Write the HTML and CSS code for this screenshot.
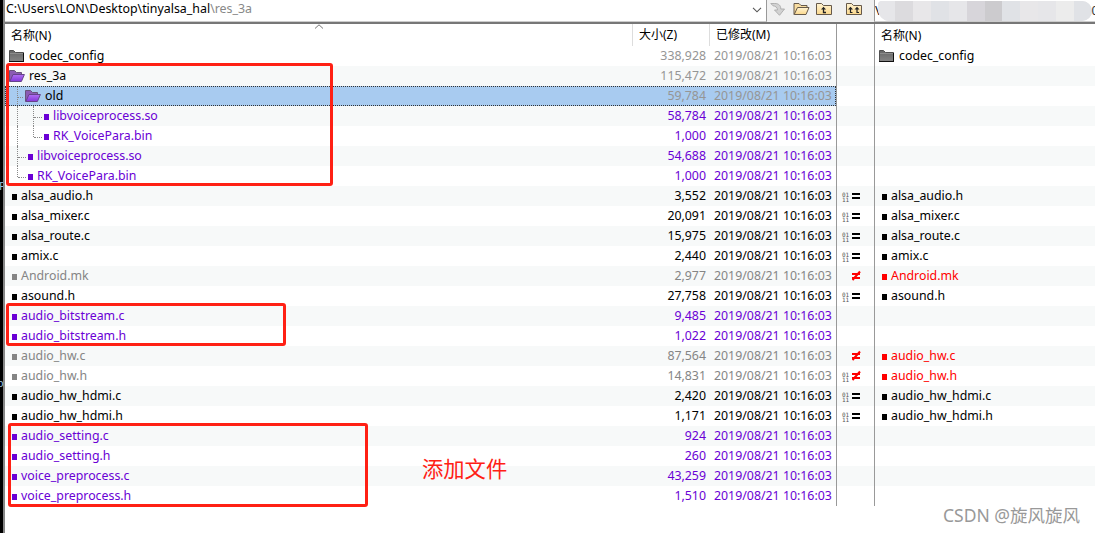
FILE: index.html
```html
<!DOCTYPE html>
<html lang="zh-CN">
<head>
    <meta charset="UTF-8">
    <meta name="viewport" content="width=device-width, initial-scale=1.0">
    <title>文件夹比较</title>
    <link rel="stylesheet" href="styles.css">
</head>
<body>
    <svg class="symbols" width="0" height="0">
        <linearGradient id="gray-fill" x2="0" y2="1">
            <stop offset="0" stop-color="#666"/><stop offset="1" stop-color="#858585"/>
        </linearGradient>
        <linearGradient id="purple-fill" x2="0" y2="1">
            <stop offset="0" stop-color="#b070f4"/><stop offset="1" stop-color="#8436d8"/>
        </linearGradient>
        <linearGradient id="yellow-fill" x2="0" y2="1">
            <stop offset="0" stop-color="#fff3d2"/><stop offset="1" stop-color="#fbd88c"/>
        </linearGradient>
        <symbol id="folder" viewBox="0 0 16 14">
            <path d="M.5 12.5v-11h4l2 2h8v9z" fill="url(#gray-fill)" stroke="#505050"/>
            <path d="M1 4.500h13" stroke="#8c8c8c"/>
            <path d="M0 12.500h15M14.500 4v9" stroke="#111"/>
        </symbol>
        <symbol id="folder-open" viewBox="0 0 16 14">
            <path d="M.5 12.5v-11h5l2 2h5v3" fill="#8b5bb4" stroke="#68537a"/>
            <path d="M.8 12.5l3.2-7h11.4l-3 7z" fill="url(#purple-fill)" stroke="#65438a"/>
        </symbol>
    </svg>

    <div class="window">
        <div class="edge">
            <span class="edge-text edge-p">P</span>
            <span class="edge-text edge-o">o</span>
        </div>
        <div class="main">
            <div class="toolbar">
                <div class="path-box">
                    <span class="path">C:\Users\LON\Desktop\tinyalsa_hal<span class="path-tail">\res_3a</span></span>
                    <svg class="chevron" width="10" height="6" viewBox="0 0 10 6"><path d="M1 .8l4 4 4-4" fill="none" stroke="#555" stroke-width="1.1"/></svg>
                </div>
                <div class="tools">
                    <svg class="tool-go" width="16" height="14" viewBox="0 0 16 14"><path d="M.8 1.500h4c4 0 6 2 6 5.500h3.700L9.500 13.300 4.500 8h3C7.500 5.500 5.500 4 3 3.800z" fill="#d2d2d2" stroke="#aaa" stroke-width=".9"/></svg>
                    <svg class="tool-open" width="17" height="14" viewBox="0 0 17 14">
                        <path d="M1 12.500v-11h5l2 2h6v3" fill="#f9dda0" stroke="#66594a"/>
                        <path d="M1.200 12.500l3.300-7h11.500l-3 7z" fill="url(#yellow-fill)" stroke="#66594a"/>
                    </svg>
                    <svg class="tool-up" width="17" height="14" viewBox="0 0 17 14">
                        <path d="M.5 12.500v-11h5l2 2h8v9z" fill="url(#yellow-fill)" stroke="#66594a"/>
                        <path d="M5 7.500L7.500 4.800 10 7.500z" fill="#222"/>
                        <path d="M7.500 7v3.500H10" fill="none" stroke="#222" stroke-width="1.300"/>
                    </svg>
                    <svg class="tool-up2" width="17" height="14" viewBox="0 0 17 14">
                        <path d="M.5 12.500v-11h5l2 2h8v9z" fill="url(#yellow-fill)" stroke="#66594a"/>
                        <path d="M2 7.500l2.500-2.700L7 7.500zM8.500 7.500L11 4.800l2.500 2.700z" fill="#222"/>
                        <path d="M4.500 7v3.500h2M11 7v3.500h2" fill="none" stroke="#222" stroke-width="1.200"/>
                    </svg>
                </div>
                <div class="path-box path-right">
                    <span>\</span>
                    <span class="mosaic"><i></i><i></i><i></i><i></i><i></i><i></i><i></i><i></i><i></i><i></i><i></i><i></i></span>
                    <span class="cut">02</span>
                </div>
            </div>

            <div class="panes">
                <div class="pane left-pane">
                    <div class="head">
                        <span class="col-name">名称(N)</span>
                        <span class="col-size">大小(Z)</span>
                        <span class="col-date">已修改(M)</span>
                        <svg class="sort" width="10" height="5" viewBox="0 0 10 5"><path d="M1 4.500L5 .8l4 3.700" fill="none" stroke="#777"/></svg>
                    </div>
                    <div id="left-rows"></div>
                </div>
                <div class="pane mid-pane">
                    <div class="head"></div>
                    <div id="mid-rows"></div>
                </div>
                <div class="pane right-pane">
                    <div class="head"><span class="col-name">名称(N)</span></div>
                    <div id="right-rows"></div>
                </div>
            </div>
        </div>
    </div>

    <div class="mark mark-dir"></div>
    <div class="mark mark-bitstream"></div>
    <div class="mark mark-setting"></div>
    <div class="note">添加文件</div>
    <div class="watermark">CSDN @旋风旋风</div>

    <script src="script.js"></script>
</body>
</html>
```

FILE: styles.css
```css
* {
    box-sizing: border-box;
}
body {
    position: relative;
    margin: 0;
    width: 1095px;
    height: 533px;
    overflow: hidden;
    background: #fff;
    color: #000;
    font-family: "Noto Sans", "Noto Sans CJK SC", sans-serif;
    font-size: 12.35px;
    line-height: 20px;
    white-space: nowrap;
}
svg {
    display: block;
    flex: none;
}
.symbols {
    position: absolute;
}
.window {
    display: flex;
    height: 533px;
}
.edge {
    position: relative;
    flex: none;
    width: 5px;
    overflow: hidden;
    background: #000;
    border-right: 2px solid #868686;
}
.edge-text {
    position: absolute;
    left: -3px;
    color: #9bc4e4;
    font-size: 11px;
}
.edge-p {
    top: 176px;
    left: -1px;
}
.edge-o {
    top: 373px;
}
.main {
    flex: 1;
    min-width: 0;
}

/* 工具栏 */
.toolbar {
    display: flex;
    height: 24px;
    background: #f0f0f0;
    border-bottom: 2px solid #777;
}
.path-box {
    display: flex;
    align-items: center;
    width: 762px;
    padding: 0 5px 3px 1px;
    background: #fff;
    border-right: 1px solid #999;
    border-bottom: 1px solid #ccc;
}
.path {
    flex: 1;
    font-size: 12.4px;
}
.path-tail {
    color: #888;
}
.chevron {
    margin: 2px -1px 0 0;
}
.tools {
    display: flex;
    width: 107px;
    padding: 2px 0 0 3px;
}
.tool-open {
    margin-left: 7px;
}
.tool-up {
    margin-left: 6px;
}
.tool-up2 {
    margin-left: 13px;
}
.path-right {
    flex: 1;
    padding: 0;
    overflow: hidden;
    border-right: 0;
    border-left: 1px solid #999;
}
.path-right > span {
    flex: none;
}
.mosaic {
    display: flex;
    width: 214px;
    height: 20px;
    margin: 0 0 0 -2px;
    overflow: hidden;
    border-radius: 4px 10px 10px 12px;
    background: #e9e9ea;
}
.mosaic i {
    flex: 1;
    background: #e6e6e9;
}
.mosaic i:nth-child(2) {
    background: #dcdbde;
}
.mosaic i:nth-child(3n) {
    background: #e8e7e9;
}
.mosaic i:nth-child(6) {
    background: #d7d5da;
}
.mosaic i:nth-child(7) {
    background: #cccbce;
}
.mosaic i:nth-child(4n) {
    background: #e0e2e6;
}
.mosaic i:nth-child(11) {
    background: #ececec;
}
.cut {
    color: #333;
}

/* 三栏列表 */
.panes {
    display: flex;
    height: 482px;
}
.left-pane {
    width: 832px;
    border-right: 1px solid #999;
}
.mid-pane {
    width: 38px;
    border-right: 1px solid #999;
}
.right-pane {
    flex: 1;
}
.head {
    position: relative;
    display: flex;
    height: 22px;
    line-height: 21px;
    font-size: 12px;
}
.head .col-name {
    padding-left: 6px;
}
.head .col-size {
    padding-left: 6px;
    text-align: left;
    border-left: 1px solid #ddd;
}
.head .col-date {
    padding-left: 6px;
    border-left: 1px solid #ddd;
}
.sort {
    position: absolute;
    left: 309px;
    top: 0;
}
.row {
    display: flex;
    height: 20px;
}
.row:nth-child(even) {
    background: #f7f9f9;
}
.col-name {
    display: flex;
    flex: 1;
    align-items: center;
}
.col-size {
    width: 77px;
    padding-right: 3px;
    text-align: right;
}
.col-date {
    width: 127px;
    padding-left: 5px;
}
.row.selected {
    background: #a8cbf0;
    outline: 1px dotted #333;
    outline-offset: -1px;
}
.indent-file {
    padding-left: 7px;
}
.indent-dir {
    padding-left: 4px;
}
.indent-tree {
    padding-left: 12px;
}
.bullet {
    width: 5px;
    height: 6px;
    margin: 2px 4px 0 0;
    background: currentColor;
}
.icon {
    margin: 0 4px 0 0;
}
.guide {
    width: 16px;
    height: 20px;
    border-left: 1px dotted #888;
}
.guide.branch {
    width: 11px;
}
.guide.to-dir {
    width: 8px;
}
.guide.branch::after {
    content: "";
    display: block;
    height: 11px;
    margin-right: 2px;
    border-bottom: 1px dotted #888;
}
.guide.last {
    height: 11px;
    align-self: flex-start;
}
.new {
    color: #6a00d5;
}
.old {
    color: #858585;
}
.diff {
    color: #f00;
}
.dir .col-size,
.dir .col-date {
    color: #959595;
}
.mid-pane .row {
    align-items: center;
}
.bits {
    width: 9px;
    margin: 2px 0 0 5px;
    font-family: "DejaVu Sans Mono", monospace;
    font-size: 6px;
    line-height: 5px;
    color: #555;
    white-space: pre-line;
}
.sign {
    margin-left: 1px;
}

/* 标注 */
.mark {
    position: absolute;
    border: 3px solid #ff2014;
    border-radius: 3px;
}
.mark-dir {
    left: 6px;
    top: 63px;
    width: 327px;
    height: 123px;
}
.mark-bitstream {
    left: 6px;
    top: 303px;
    width: 280px;
    height: 43px;
}
.mark-setting {
    left: 8px;
    top: 423px;
    width: 360px;
    height: 84px;
}
.note {
    position: absolute;
    left: 422px;
    top: 454px;
    color: #ff2014;
    font-size: 21.3px;
    line-height: 30px;
}
.watermark {
    position: absolute;
    left: 943px;
    top: 503px;
    color: #999;
    font-size: 17.5px;
    line-height: 25px;
}
```

FILE: script.js
```js
// 名称, 大小, 状态, 层级, 比较结果
const files = [
    {name: "codec_config", size: "338,928", type: "dir", right: true},
    {name: "res_3a", size: "115,472", type: "open"},
    {name: "old", size: "59,784", type: "open", level: 1, selected: true},
    {name: "libvoiceprocess.so", size: "58,784", state: "new", level: 2},
    {name: "RK_VoicePara.bin", size: "1,000", state: "new", level: 2, last: true},
    {name: "libvoiceprocess.so", size: "54,688", state: "new", level: 1},
    {name: "RK_VoicePara.bin", size: "1,000", state: "new", level: 1, last: true},
    {name: "alsa_audio.h", size: "3,552", bits: true, sign: "same"},
    {name: "alsa_mixer.c", size: "20,091", bits: true, sign: "same"},
    {name: "alsa_route.c", size: "15,975", bits: true, sign: "same"},
    {name: "amix.c", size: "2,440", bits: true, sign: "same"},
    {name: "Android.mk", size: "2,977", state: "old", sign: "diff"},
    {name: "asound.h", size: "27,758", bits: true, sign: "same"},
    {name: "audio_bitstream.c", size: "9,485", state: "new"},
    {name: "audio_bitstream.h", size: "1,022", state: "new"},
    {name: "audio_hw.c", size: "87,564", state: "old", sign: "diff"},
    {name: "audio_hw.h", size: "14,831", state: "old", bits: true, sign: "diff"},
    {name: "audio_hw_hdmi.c", size: "2,420", bits: true, sign: "same"},
    {name: "audio_hw_hdmi.h", size: "1,171", bits: true, sign: "same"},
    {name: "audio_setting.c", size: "924", state: "new"},
    {name: "audio_setting.h", size: "260", state: "new"},
    {name: "voice_preprocess.c", size: "43,259", state: "new"},
    {name: "voice_preprocess.h", size: "1,510", state: "new"}
];

const signs = {
    same: '<path d="M0 4h8M0 8h8" stroke="#000" stroke-width="2"/>',
    diff: '<path d="M0 4h8M0 8h8M.5 10L8 1.500" stroke="#f00" stroke-width="2"/>'
};

function nameCell(f, level) {
    let html = "";
    if (level === 2) html += '<span class="guide"></span>';
    if (level) {
        html += `<span class="guide branch ${f.type ? "to-dir" : ""} ${f.last ? "last" : ""}"></span>`;
    }
    if (f.type) {
        const id = f.type === "dir" ? "folder" : "folder-open";
        html += `<svg class="icon" width="16" height="14"><use href="#${id}"/></svg>`;
    } else {
        html += '<span class="bullet"></span>';
    }
    const indent = level ? "tree" : f.type ? "dir" : "file";
    return `<span class="col-name indent-${indent}">${html}<span>${f.name}</span></span>`;
}

let left = "", mid = "", right = "";
for (const f of files) {
    const cls = `row ${f.state || ""} ${f.type ? "dir" : ""} ${f.selected ? "selected" : ""}`;
    left += `<div class="${cls}">${nameCell(f, f.level || 0)}<span class="col-size">${f.size}</span><span class="col-date">2019/08/21 10:16:03</span></div>`;

    const sign = f.sign ? `<svg class="sign" width="9" height="12">${signs[f.sign]}</svg>` : "";
    mid += `<div class="row"><span class="bits">${f.bits ? "01\n11" : ""}</span>${sign}</div>`;

    right += `<div class="row ${f.sign === "diff" ? "diff" : ""}">${f.right || f.sign ? nameCell(f, 0) : ""}</div>`;
}
document.getElementById("left-rows").innerHTML = left;
document.getElementById("mid-rows").innerHTML = mid;
document.getElementById("right-rows").innerHTML = right;
```
